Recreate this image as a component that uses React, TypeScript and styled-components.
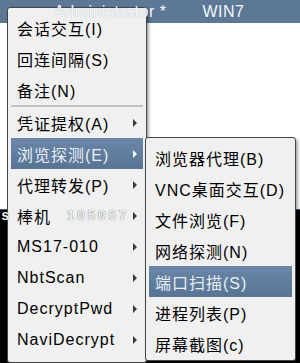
import React from 'react';
import styled, { createGlobalStyle, css } from 'styled-components';

const FONT = `'Liberation Sans', 'Noto Sans CJK SC', sans-serif`;

const GlobalStyle = createGlobalStyle`
  html, body {
    margin: 0;
    padding: 0;
    background: #fff;
  }
  body {
    font-family: ${FONT};
  }
`;

const Screen = styled.div`
  position: relative;
  width: 300px;
  height: 363px;
  overflow: hidden;
  display: flex;
  flex-direction: column;
  background: #fff;
`;

const TitleBar = styled.div`
  flex: none;
  height: 23px;
  background: #5d7897;
`;

// tab captions are painted over the popup in the capture
const Titles = styled.div`
  position: absolute;
  top: 0;
  left: 0;
  right: 0;
  height: 23px;
  z-index: 3;
  display: flex;
  align-items: center;
  gap: 36px;
  padding-left: 54px;
  font-size: 16px;
  letter-spacing: 0.5px;
  color: #f4f7fb;
  text-shadow: 0 0 1px rgba(90, 110, 140, 0.5);
  pointer-events: none;
`;

const Workspace = styled.div`
  flex: none;
  height: 186px;
  background: #fff;
`;

const Terminal = styled.div`
  flex: 1;
  background: #000;
  border-top: 1px solid #3d5878;
`;

const TermLine = styled.div`
  position: absolute;
  top: 208px;
  left: 1px;
  z-index: 3;
  display: flex;
  gap: 55px;
  font-family: 'Liberation Mono', monospace;
  font-size: 14px;
  font-weight: bold;
  letter-spacing: 2px;
  line-height: 16px;
  color: #f0f0f0;
  text-shadow: 0 0 1px rgba(0, 0, 0, 0.7);
  pointer-events: none;
`;

const menuBox = css`
  position: absolute;
  z-index: 2;
  box-sizing: border-box;
  display: flex;
  flex-direction: column;
  background: #f0f0f0;
  border: 1px solid #444;
  border-radius: 3px;
  box-shadow: 2px 2px 3px rgba(0, 0, 0, 0.35);
`;

const MainMenu = styled.div`
  ${menuBox}
  left: 7px;
  top: 7px;
  width: 140px;
  height: 356px;
  padding: 4px 3px 6px;
`;

const SubMenu = styled.div`
  ${menuBox}
  left: 145px;
  top: 137px;
  width: 151px;
  height: 224px;
  padding: 4px 3px 1px;
`;

const Item = styled.div<{ $active?: boolean }>`
  flex: none;
  height: 31px;
  display: flex;
  align-items: center;
  justify-content: space-between;
  padding: 0 6px;
  font-size: 16px;
  letter-spacing: 1px;
  white-space: nowrap;
  color: ${p => (p.$active ? '#e9eef5' : '#000')};
  background: ${p => (p.$active ? 'linear-gradient(#6a87a7, #587494)' : 'transparent')};
`;

const Arrow = styled.span<{ $active?: boolean }>`
  width: 0;
  height: 0;
  border-top: 4px solid transparent;
  border-bottom: 4px solid transparent;
  border-left: 4px solid ${p => (p.$active ? '#fff' : '#3a3a3a')};
`;

const Separator = styled.div`
  flex: none;
  height: 2px;
  background: #c2c2c2;
`;

interface IEntry {
  label: string;
  sub?: boolean;
  active?: boolean;
}

const topEntries: IEntry[] = [
  { label: '会话交互(I)' },
  { label: '回连间隔(S)' },
  { label: '备注(N)' },
];

const lowerEntries: IEntry[] = [
  { label: '凭证提权(A)', sub: true },
  { label: '浏览探测(E)', sub: true, active: true },
  { label: '代理转发(P)', sub: true },
  { label: '棒机', sub: true },
  { label: 'MS17-010', sub: true },
  { label: 'NbtScan', sub: true },
  { label: 'DecryptPwd', sub: true },
  { label: 'NaviDecrypt', sub: true },
];

const subEntries: IEntry[] = [
  { label: '浏览器代理(B)' },
  { label: 'VNC桌面交互(D)' },
  { label: '文件浏览(F)' },
  { label: '网络探测(N)' },
  { label: '端口扫描(S)', active: true },
  { label: '进程列表(P)' },
  { label: '屏幕截图(c)' },
];

const renderItem = (e: IEntry) => (
  <Item key={e.label} $active={e.active}>
    <span>{e.label}</span>
    {e.sub && <Arrow $active={e.active} />}
  </Item>
);

const App = (): JSX.Element => (
  <>
    <GlobalStyle />
    <Screen>
      <TitleBar />
      <Workspace />
      <Terminal />
      <Titles>
        <span>Administrator *</span>
        <span>WIN7</span>
      </Titles>
      <MainMenu>
        {topEntries.map(renderItem)}
        <Separator />
        {lowerEntries.map(renderItem)}
      </MainMenu>
      <SubMenu>{subEntries.map(renderItem)}</SubMenu>
      <TermLine>
        <span>s</span>
        <span>105057</span>
      </TermLine>
    </Screen>
  </>
);

export default App;
